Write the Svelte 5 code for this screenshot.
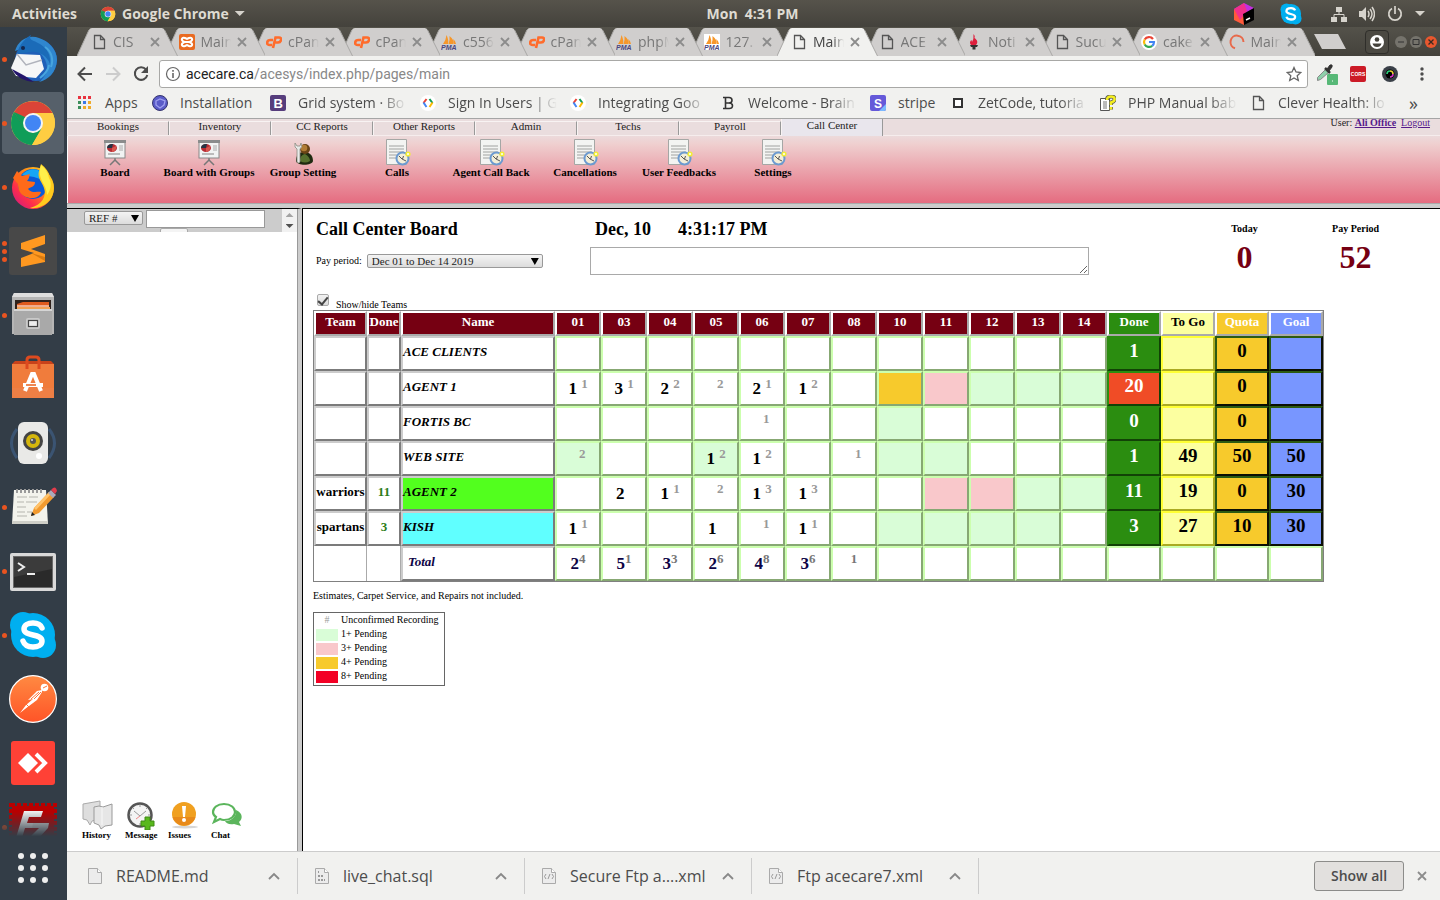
<script>
  const dock = [
    { icon: 'thunderbird', label: 'Thunderbird', dots: 1 },
    { icon: 'chrome', label: 'Google Chrome', dots: 1, active: true },
    { icon: 'firefox', label: 'Firefox', dots: 1 },
    { icon: 'sublime', label: 'Sublime Text', dots: 3 },
    { icon: 'files', label: 'Files', dots: 1 },
    { icon: 'software', label: 'Software', dots: 0 },
    { icon: 'rhythmbox', label: 'Rhythmbox', dots: 0 },
    { icon: 'gedit', label: 'Text Editor', dots: 1 },
    { icon: 'terminal', label: 'Terminal', dots: 1 },
    { icon: 'skype', label: 'Skype', dots: 1 },
    { icon: 'postman', label: 'Postman', dots: 0 },
    { icon: 'anydesk', label: 'AnyDesk', dots: 0 },
    { icon: 'filezilla', label: 'FileZilla', dots: 1, faded: true }
  ];

  const tabs = [
    ['page', 'CIS'], ['xampp', 'Main'], ['cpanel', 'cPan'], ['cpanel', 'cPan'],
    ['pma', 'c556'], ['cpanel', 'cPan'], ['pma', 'phpM'], ['pmaWhite', '127.'],
    ['page', 'Main'], ['page', 'ACE'], ['flame', 'Noti'], ['page', 'Sucu'],
    ['google', 'cake'], ['spinner', 'Main']
  ];
  const activeTab = 8;

  const bookmarks = [
    { icon: 'apps', text: 'Apps', w: 34 },
    { icon: 'orb', text: 'Installation', w: 77 },
    { icon: 'bootstrap', text: 'Grid system · Bo', w: 109, fade: true },
    { icon: 'gdev', text: 'Sign In Users  |  G', w: 109, fade: true },
    { icon: 'gdev', text: 'Integrating Goo', w: 109, fade: true },
    { icon: 'braintree', text: 'Welcome - Brain', w: 109, fade: true },
    { icon: 'stripe', text: 'stripe', w: 39 },
    { icon: 'square', text: 'ZetCode, tutoria', w: 109, fade: true },
    { icon: 'phpman', text: 'PHP Manual bab', w: 109, fade: true },
    { icon: 'page', text: 'Clever Health: lo', w: 109, fade: true }
  ];

  const menu = ['Bookings', 'Inventory', 'CC Reports', 'Other Reports', 'Admin', 'Techs', 'Payroll', 'Call Center'];

  const tools = [
    ['board', 'Board'], ['board', 'Board with Groups'], ['group', 'Group Setting'],
    ['calls', 'Calls'], ['calls', 'Agent Call Back'], ['calls', 'Cancellations'],
    ['calls', 'User Feedbacks'], ['calls', 'Settings']
  ];

  const shortcuts = [
    ['history', 'History'], ['message', 'Message'], ['issues', 'Issues'], ['chat', 'Chat']
  ];

  const days = ['01', '03', '04', '05', '06', '07', '08', '10', '11', '12', '13', '14'];

  // d: day index -> [confirmed, unconfirmed]; p: day index -> pending level
  const rows = [
    { name: 'ACE CLIENTS', d: {}, p: {}, sum: ['1', '', '0', ''] },
    { name: 'AGENT 1', d: { 0: ['1', '1'], 1: ['3', '1'], 2: ['2', '2'], 3: ['', '2'], 4: ['2', '1'], 5: ['1', '2'] },
      p: { 7: 'p4', 8: 'p3', 9: 'p1', 10: 'p1', 11: 'p1' }, sum: ['20', '', '0', ''], over: true },
    { name: 'FORTIS BC', d: { 4: ['', '1'] }, p: { 7: 'p1' }, sum: ['0', '', '0', ''] },
    { name: 'WEB SITE', d: { 0: ['', '2'], 3: ['1', '2'], 4: ['1', '2'], 6: ['', '1'] },
      p: { 0: 'p1', 3: 'p1', 7: 'p1', 8: 'p1' }, sum: ['1', '49', '50', '50'] },
    { team: 'warriors', done: '11', name: 'AGENT 2', color: 'lime',
      d: { 1: ['2', ''], 2: ['1', '1'], 3: ['', '2'], 4: ['1', '3'], 5: ['1', '3'] },
      p: { 8: 'p3', 9: 'p3', 10: 'p1', 11: 'p1' }, sum: ['11', '19', '0', '30'] },
    { team: 'spartans', done: '3', name: 'KISH', color: 'aqua',
      d: { 0: ['1', '1'], 3: ['1', ''], 4: ['', '1'], 5: ['1', '1'] },
      p: { 7: 'p1', 8: 'p1', 9: 'p1', 10: 'p1' }, sum: ['3', '27', '10', '30'] }
  ];
  const totals = [['2', '4'], ['5', '1'], ['3', '3'], ['2', '6'], ['4', '8'], ['3', '6'], ['', '1'], null, null, null, null, null];

  const legend = [['p1', '1+ Pending'], ['p3', '3+ Pending'], ['p4', '4+ Pending'], ['p8', '8+ Pending']];
  const downloads = [['file', 'README.md'], ['sql', 'live_chat.sql'], ['xml', 'Secure Ftp a….xml'], ['xml', 'Ftp acecare7.xml']];

  let showTeams = $state(true);
</script>

{#snippet chromeLogo(size)}
  <svg width={size} height={size} viewBox="0 0 48 48" aria-hidden="true">
    <circle cx="24" cy="24" r="22" fill="#ffcd42" />
    <path d="M24 24L13 30 5 13A22 22 0 0 1 43.500 14H24z" fill="#db4437" />
    <path d="M5 13A22 22 0 0 0 23 46L32.500 29.500 24 34 15.500 29z" fill="#0f9d58" />
    <path d="M5 13L15.500 30 16 18z" fill="#0f9d58" />
    <path d="M43.500 14H24L33 29.500 23 46A22 22 0 0 0 43.500 14z" fill="#ffcd42" />
    <circle cx="24" cy="24" r="10" fill="#f4f4f4" />
    <circle cx="24" cy="24" r="8" fill="#4285f4" />
  </svg>
{/snippet}

{#snippet dockIcon(name)}
  {#if name === 'chrome'}
    {@render chromeLogo(48)}
  {:else}
    <svg width="48" height="48" viewBox="0 0 48 48" aria-hidden="true">
      {#if name === 'thunderbird'}
        <circle cx="27" cy="25" r="21" fill="#1f5fb8" />
        <path d="M6 16C9 5 20-1 30 3c10 3 18 12 18 22-1 13-9 20-18 22 9-7 10-16 5-24C29 13 20 10 6 16z" fill="#2f86cf" />
        <path d="M8 19C10 9 18 2 22 0c-3 5 2 5 9 9 8 5 11 12 10 20-3-8-11-13-19-12z" fill="#1b6bb8" />
        <path d="M36 12c6 4 9 12 6 20M40 30c-1 6-5 10-9 13" fill="none" stroke="#47a4de" stroke-width="2" />
        <path d="M2 33L8 19l23 1 4 14-8 9L7 41z" fill="#f5f6f7" />
        <path d="M8 19l9 11 16-5" fill="none" stroke="#b0b3bc" stroke-width="1.500" />
        <path d="M3 34c4 8 12 12 22 13l-9-6z" fill="#23146c" />
        <circle cx="14" cy="13" r="2" fill="#142850" />
      {:else if name === 'firefox'}
        <defs>
          <linearGradient id="fx" x1="0" y1="1" x2="1" y2="0">
            <stop offset="0" stop-color="#c3178f" /><stop offset=".3" stop-color="#ff2d4a" />
            <stop offset=".6" stop-color="#ff8a16" /><stop offset="1" stop-color="#ffe226" />
          </linearGradient>
        </defs>
        <circle cx="24" cy="25" r="21" fill="url(#fx)" />
        <circle cx="24" cy="21" r="15" fill="#0a5ad8" />
        <path d="M13 12C17 6 27 4 32 9l2 8-9-3z" fill="#16a6f5" />
        <path d="M4 15l4-7 5 5 8-2c-1 3-1 5-3 7l8 1c0 5-5 5-7 7 4 5 10 2 13 3-1 6-10 8-17 4-5-3-6-8-6-12z" fill="#ff6a1a" />
        <path d="M30 8l2-7c5 4 8 8 9 13 5 6 5 16 0 23-5 6-13 9-20 8 12-3 17-12 14-20-2-6-7-10-5-17z" fill="#ffcb1e" />
        <path d="M31 6l1-4c5 4 7 8 8 13 3 5 2 12-2 17 0-10-9-15-7-26z" fill="#fff04a" />
      {:else if name === 'sublime'}
        <rect width="48" height="48" rx="3" fill="#484848" />
        <path d="M12 16L36 8v9L22 22l14 5v8L12 40v-9l13-5-13-4z" fill="#ff9820" />
        <path d="M22 26l14 4v4z" fill="#d87a10" />
      {:else if name === 'files'}
        <path d="M5 2h38l2 4v37H3V6z" fill="#b5b5b5" />
        <path d="M5 2h38l2 4H3z" fill="#dedede" />
        <rect x="6" y="9" width="36" height="12" fill="#30221c" />
        <path d="M8 13l6-2h26v10H8z" fill="#df5a1e" />
        <path d="M8 16h33v5H8z" fill="#f2a154" />
        <path d="M8 15h32" stroke="#fff" stroke-width="1" />
        <path d="M5 18h38v26H5z" fill="#a9a9a9" />
        <path d="M5 18h38v2H5z" fill="#d5d5d5" />
        <rect x="17" y="27" width="14" height="11" rx="2" fill="#c9c9c9" />
        <rect x="19.500" y="29.500" width="9" height="6" fill="#eee" stroke="#444" stroke-width="1.200" />
      {:else if name === 'software'}
        <path d="M3 9l3-3h36l3 3v34H3z" fill="#c8421a" />
        <rect x="3" y="9" width="42" height="34" fill="#f07c3c" />
        <rect x="3" y="33" width="42" height="10" fill="#ee7f45" />
        <path d="M18 14V5q0-3 3-3h6q3 0 3 3v9" fill="none" stroke="#dd4a1f" stroke-width="3" />
        <path d="M16 36l7-17h2l7 17M14 30h20" fill="none" stroke="#fff" stroke-width="4" />
        <path d="M17 30h10" stroke="#e8601c" stroke-width="1.500" />
      {:else if name === 'rhythmbox'}
        <path d="M8 10Q-3 24 8 39M40 10Q51 24 40 39" fill="none" stroke="#3b5472" stroke-width="3" />
        <rect x="9" y="3" width="30" height="42" rx="6" fill="#e9e9e7" />
        <circle cx="24" cy="22" r="10" fill="#444" />
        <circle cx="24" cy="22" r="7" fill="#d5b60c" />
        <circle cx="24" cy="22" r="3" fill="#555" />
        <circle cx="23" cy="21" r="1" fill="#ddd" />
        <circle cx="30" cy="37" r="3" fill="#fff" />
      {:else if name === 'gedit'}
        <path d="M5 7h32l2 34H3z" fill="#f3f3ec" />
        <path d="M3 38h36v3H3z" fill="#cfcfc8" />
        <path d="M8 6v4M12 6v4M16 6v4M20 6v4M24 6v4M28 6v4M32 6v4" stroke="#999" stroke-width="2" />
        <path d="M8 14h10m2 0h9M8 19h7m2 0h11M8 24h9M8 29h8m2 0h5M8 33h10" stroke="#b5b5ae" />
        <path d="M22 33l3-8L40 9l5 5-15 16z" fill="#f29a2e" />
        <path d="M25 25L40 9l2 2-15 16z" fill="#ffc36b" />
        <path d="M39 10l3-3 5 5-3 3z" fill="#aab" />
        <path d="M42 7l2-2q3-2 4 3l-2 3z" fill="#e23c4c" />
        <path d="M22 33l1-4 3 3z" fill="#222" />
      {:else if name === 'terminal'}
        <rect x="1" y="6" width="46" height="38" rx="2" fill="#d9d9d9" />
        <rect x="4" y="9" width="40" height="32" fill="#6a6a6a" />
        <rect x="5" y="10" width="38" height="30" fill="#2a2a2a" />
        <path d="M5 10h38v12L5 30z" fill="#3b3b3b" />
        <path d="M9 16l6 4-6 4M18 27h8" fill="none" stroke="#eee" stroke-width="2" />
      {:else if name === 'skype'}
        <circle cx="14" cy="14" r="13" fill="#00aff0" />
        <circle cx="34" cy="34" r="13" fill="#00aff0" />
        <circle cx="24" cy="24" r="22" fill="#00aff0" />
        <path d="M33 17q-2-5-9-5c-5 0-9 2-9 6 0 8 18 4 18 12 0 4-4 6-9 6q-8 0-10-6" fill="none" stroke="#fff" stroke-width="5.500" stroke-linecap="round" />
      {:else if name === 'postman'}
        <defs>
          <linearGradient id="pm" x1="0" y1="0" x2="0" y2="1">
            <stop offset="0" stop-color="#ff8a42" /><stop offset="1" stop-color="#ff5427" />
          </linearGradient>
        </defs>
        <circle cx="24" cy="24" r="23.400" fill="url(#pm)" stroke="#fff" stroke-width="1.200" />
        <circle cx="35.500" cy="12.500" r="3.800" fill="#fff" />
        <path d="M33 15l-5 1-9 9 5-1-7 6-6 8 5-4 12-9 5-8z" fill="#fff" />
        <path d="M22 24l8-7M25 24l7-7M17 29l3 3" stroke="#ff7438" />
        <path d="M34 13l4-2" stroke="#ff7438" />
      {:else if name === 'anydesk'}
        <rect x="2" y="2" width="44" height="44" rx="3" fill="#ff4136" />
        <path d="M9 24l10-10 10 10-10 10z" fill="#fff" />
        <path d="M27 15l9 9-9 9" fill="none" stroke="#fff" stroke-width="4" />
      {:else if name === 'filezilla'}
        <rect x="2" y="2" width="44" height="44" fill="none" stroke="#b80000" stroke-width="4" stroke-dasharray="4 2" />
        <rect x="3" y="3" width="42" height="42" fill="#b80000" />
        <path d="M15 8h19l-2 6H20l-2 6h11l-2 5H16l-4 13H6z" fill="#eee" />
        <path d="M24 20h16l-1 5-12 13h11l-1 4H17l1-5 12-12h-7z" fill="#ddd" />
      {/if}
    </svg>
  {/if}
{/snippet}

{#snippet glyph(name)}
  <svg width="16" height="16" viewBox="0 0 16 16" aria-hidden="true">
    {#if name === 'page'}
      <path d="M3.500 1.500h6l4 4v9h-10zM9.500 1.500v4h4" fill="none" stroke="#555" stroke-width="1.300" />
    {:else if name === 'xampp'}
      <rect width="16" height="16" rx="2" fill="#e96a20" />
      <path d="M5.500 8C1 6 3 3 6 4l2 1 2-1c3-1 5 2 .500 4 4.500 2 2.500 5-.500 4l-2-1-2 1c-3 1-5-2-.500-4zM6 8h4" fill="none" stroke="#fff" stroke-width="2" />
    {:else if name === 'cpanel'}
      <path d="M7 6H4.500Q1.500 6 1.200 8.500T4 11h2M7 14L9.500 3.500H13q2.500 0 2 2.500t-3 2.500H9.500" fill="none" stroke="#ff6c2c" stroke-width="2.600" />
    {:else if name === 'pma' || name === 'pmaWhite'}
      {#if name === 'pmaWhite'}<rect width="16" height="16" fill="#fff" />{/if}
      <path d="M2 10Q5 6 5.500 1 8 6 7 10zM7.500 10Q9 6 8.500 2q5 4 4 8zM13 10q0-3-1-5 3 2 3 5z" fill="#f6972a" />
      <text x="0" y="16" font-family="Liberation Sans" font-size="7" font-weight="700" font-style="italic" fill="#4a4680">PMA</text>
    {:else if name === 'flame'}
      <path d="M7.500 0q2 2 1 4c3 2 4 5 1 7.500H6C3 10 4 7 5.500 6l.500 2q2-3 1.500-8z" fill="#dd1f3d" />
      <path d="M4 11h8l-1 2H9.500v2.500h-3V13H5z" fill="#333" />
    {:else if name === 'google'}
      <circle cx="8" cy="8" r="8" fill="#fff" />
      <path d="M12 5A5 5 0 0 0 3.700 5.500" fill="none" stroke="#ea4335" stroke-width="2.200" />
      <path d="M3.700 5.500a5 5 0 0 0 0 5" fill="none" stroke="#fbbc05" stroke-width="2.200" />
      <path d="M3.700 10.500a5 5 0 0 0 7.500 1.300" fill="none" stroke="#34a853" stroke-width="2.200" />
      <path d="M11.200 11.800Q13 10.300 13 8H8" fill="none" stroke="#4285f4" stroke-width="2.200" />
    {:else if name === 'spinner'}
      <path d="M6 14.300A6.500 6.500 0 1 1 14.500 8" fill="none" stroke="#e8694a" stroke-width="2" />
    {:else if name === 'apps'}
      <g transform="translate(1 1)">
        <path d="M0 0h3v3H0zM5 0h3v3H5zM10 0h3v3h-3z" fill="#e8333f" />
        <path d="M0 5h3v3H0z" fill="#3b8e5a" /><path d="M5 5h3v3H5z" fill="#3b78e7" /><path d="M10 5h3v3h-3z" fill="#efab2a" />
        <path d="M0 10h3v3H0z" fill="#3b8e5a" /><path d="M5 10h3v3H5zM10 10h3v3h-3z" fill="#efab2a" />
      </g>
    {:else if name === 'orb'}
      <circle cx="8" cy="8" r="7.500" fill="#5a5bc8" stroke="#35356e" />
      <path d="M4 6l4-2 5 2-1 4-4 3-4-3z" fill="none" stroke="#9fa0f0" stroke-width="1.300" />
    {:else if name === 'bootstrap'}
      <rect width="16" height="16" rx="2" fill="#563d7c" />
      <text x="3.500" y="13" font-family="Liberation Sans" font-size="13" font-weight="700" fill="#fff">B</text>
    {:else if name === 'gdev'}
      <circle cx="8" cy="8" r="8" fill="#fff" />
      <path d="M6.500 4L3.500 8" stroke="#ea4335" stroke-width="2" /><path d="M3.500 7.500l3 4.500" stroke="#4285f4" stroke-width="2" />
      <path d="M9.500 4l3 4" stroke="#0f9d58" stroke-width="2" /><path d="M12.500 7.500l-3 4.500" stroke="#fbbc05" stroke-width="2" />
    {:else if name === 'braintree'}
      <path d="M3 2.500h6q3 0 3 2.700T9 8q3.500 0 3.500 2.800T9 13.500H3M5.500 2.500v11M5.500 8H9" fill="none" stroke="#333" stroke-width="1.600" />
    {:else if name === 'stripe'}
      <rect width="16" height="16" rx="2" fill="#6559d9" />
      <path d="M16 9v5q0 2-2 2H9z" fill="#7bb9ff" />
      <text x="4" y="12.500" font-family="Liberation Sans" font-size="12" font-weight="700" fill="#fff">S</text>
    {:else if name === 'square'}
      <rect x="4" y="4" width="8" height="8" fill="#fff" stroke="#333" stroke-width="2" />
    {:else if name === 'phpman'}
      <path d="M.500 3.500h9v12h-9z" fill="#fff" stroke="#555" /><path d="M3 7h4M3 9h4M3 11h4M3 13h4" stroke="#777" />
      <path d="M7 5q0-3.500 4-3.500t3.500 3q0 2-3.500 3V10M11 12v2.500" fill="none" stroke="#555" stroke-width="4" />
      <path d="M7 5q0-3.500 4-3.500t3.500 3q0 2-3.500 3V10M11 12v2.500" fill="none" stroke="#f4ee20" stroke-width="2.600" />
    {:else}
      <path d="M1.500.500h9l4 4v11h-13z" fill="#ececec" stroke="#aaa" /><path d="M10.500.500v4h4" fill="#fff" stroke="#aaa" />
      {#if name === 'sql'}
        <path d="M4 4h1M4 8h2M7 8h2M4 12h2M7 12h2M10 12h1" stroke="#999" stroke-width="2" />
      {:else if name === 'xml'}
        <path d="M5 6L3.500 8.500 5 11M11 6l1.500 2.500L11 11M9 6l-2 5" fill="none" stroke="#999" />
      {/if}
    {/if}
  </svg>
{/snippet}

{#snippet toolIcon(name)}
  <svg width="28" height="28" viewBox="0 0 28 28" aria-hidden="true">
    {#if name === 'board'}
      <path d="M14 19v3M14 21l-5 5M14 21l5 5" stroke="#777" stroke-width="1.500" fill="none" />
      <rect x="4" y="3" width="20" height="16" fill="#f1f3f3" stroke="#888" />
      <rect x="3" y="1" width="22" height="3" fill="#8a8c8c" />
      <ellipse cx="11" cy="9" rx="5" ry="4" fill="#b62c34" /><path d="M11 9H6a5 4 0 0 1 6-4z" fill="#243444" /><path d="M11 9l4-2a4.500 4.500 0 0 1-4 6z" fill="#d8564e" />
      <path d="M18 7h4M18 9h4M18 11h4" stroke="#aaa" /><path d="M7 15h12" stroke="#bbb" stroke-width="2" />
    {:else if name === 'group'}
      <path d="M7 22c0-6 3-9 8-9s9 3 9 9c-1 5-16 5-17 0z" fill="#1f2a10" />
      <path d="M11 22q0-6 5-7 5 3 5 7-5 3-10 0z" fill="#56702e" />
      <circle cx="16" cy="10" r="5" fill="#6a4416" /><circle cx="15" cy="9" r="3.300" fill="#b07c34" />
      <path d="M6 4q-1 5 2 6v13q2 2 3 0V10q3-2 1-6l-1 3H8z" fill="#e8eae8" stroke="#8a8a80" stroke-width=".8" />
    {:else}
      <path d="M3.500.500h20v25h-20z" fill="#f3f4f2" stroke="#a5a7a5" />
      <path d="M6 7h15M6 10h15M6 13h15M6 16h10M6 19h8" stroke="#a0a2a0" />
      <circle cx="19.500" cy="19.500" r="6" fill="#f3eed8" stroke="#6c9ad0" stroke-width="2" />
      <path d="M16 17l3 3 4 2M19.500 20l1-3" stroke="#555" fill="none" />
      <circle cx="25" cy="15" r="2.600" fill="#f2ee38" /><circle cx="25" cy="15" r="1" fill="#fff" />
    {/if}
  </svg>
{/snippet}

{#snippet shortcutIcon(name)}
  <svg width="32" height="30" viewBox="0 0 32 30" aria-hidden="true">
    {#if name === 'history'}
      <path d="M1 4l17-3v18l-8 2-2 4-3-5-4-1z" fill="#dedede" stroke="#aaa" />
      <path d="M12 7l5-1 4 1 9-3v21l-7 1-4 3-2-4-5-2z" fill="#e6e6e6" stroke="#9a9a9a" />
      <path d="M20 7v18" stroke="#f8f8f8" />
    {:else if name === 'message'}
      <circle cx="15" cy="15" r="11.500" fill="#f4f4f4" stroke="#555" stroke-width="2.500" />
      <path d="M15 5v2M15 23v2M5 15h2M23 15h2M8 8l1 1M22 8l-1 1" stroke="#999" />
      <path d="M9 11l6 5 6-5" fill="none" stroke="#999" /><path d="M15 16l-4 3" stroke="#e88" />
      <path d="M20 17h5v4h4v5h-4v4h-5v-4h-4v-5h4z" fill="#58b81c" stroke="#3e8a14" />
    {:else if name === 'issues'}
      <ellipse cx="17" cy="27" rx="13" ry="1.500" fill="#d6d6d6" />
      <circle cx="16" cy="14" r="12" fill="#f0a020" /><path d="M4.500 17a12 12 0 0 0 23 0z" fill="#e88a1a" />
      <path d="M14 6h4l-1 11h-2z" fill="#fff" /><circle cx="16" cy="20" r="2" fill="#fff" />
    {:else}
      <path d="M25 10c7 3 7 9 3 12l2 4-7-2c-5 1-8-1-9-3 7 0 12-5 11-11z" fill="#5bb55c" />
      <path d="M13 4c7 0 11 4 11 8s-4 8-11 8q-2 0-4-1l-6 3 2-5q-3-2-3-5c0-4 4-8 11-8z" fill="#fff" stroke="#5bb55c" stroke-width="2.200" />
    {/if}
  </svg>
{/snippet}

{#snippet cross()}
  <svg width="10" height="10" viewBox="0 0 10 10" aria-hidden="true"><path d="M1 1l8 8M9 1l-8 8" stroke="#8c8c8c" stroke-width="1.800" /></svg>
{/snippet}

<div class="desktop">
  <header class="topbar">
    <div class="side">
      <button class="bare">Activities</button>
      <button class="bare app">{@render chromeLogo(16)}<span>Google Chrome</span><i class="caret"></i></button>
    </div>
    <button class="bare clock">Mon&nbsp; 4:31 PM</button>
    <div class="side tray">
      <svg width="22" height="24" viewBox="0 0 22 24" aria-hidden="true">
        <path d="M1 7l10-6 10 5-10 6z" fill="#c42ee0" /><path d="M1 7l10 5v11L1 18z" fill="#ff5a3c" /><path d="M1 7l10-6 3 8-7 9z" fill="#f1308c" /><path d="M10 12l11-6v12l-10 5z" fill="#000" /><path d="M13 18l4-2" stroke="#fff" stroke-width="1.500" />
      </svg>
      <svg class="tskype" width="22" height="22" viewBox="0 0 48 48" aria-hidden="true">
        <circle cx="14" cy="14" r="13" fill="#00aff0" /><circle cx="34" cy="34" r="13" fill="#00aff0" /><circle cx="24" cy="24" r="22" fill="#00aff0" />
        <path d="M33 16q-2-5-9-5c-6 0-10 3-10 7 0 8 19 4 19 12 0 4-4 6-9 6q-8 0-10-6" fill="none" stroke="#fff" stroke-width="5" />
      </svg>
      <svg width="16" height="16" viewBox="0 0 16 16" aria-hidden="true"><path d="M5 1h6v5H5zM0 11h6v5H0zM10 11h6v5h-6z" fill="#d6d3cc" /><path d="M8 6v3M3 11V8.500h10V11" fill="none" stroke="#d6d3cc" /></svg>
      <svg width="16" height="16" viewBox="0 0 16 16" aria-hidden="true"><path d="M0 5h3l4-4v14l-4-4H0z" fill="#d6d3cc" /><path d="M9 5q2 3 0 6M11 3q4 5 0 10M13 1q5 7 0 14" fill="none" stroke="#d6d3cc" stroke-width="1.500" /></svg>
      <svg width="16" height="16" viewBox="0 0 16 16" aria-hidden="true"><path d="M5 2.500a6.200 6.200 0 1 0 6 0M8 0v8" fill="none" stroke="#d6d3cc" stroke-width="1.700" /></svg>
      <i class="caret"></i>
    </div>
  </header>

  <nav class="dock" aria-label="Dock">
    <div class="apps">
      {#each dock as item}
        <button class="launcher" class:active={item.active} class:faded={item.faded} aria-label={item.label}>
          <span class="dots">{#each Array(item.dots) as _}<i></i>{/each}</span>
          {@render dockIcon(item.icon)}
        </button>
      {/each}
    </div>
    <button class="grid" aria-label="Show Applications">{#each Array(9) as _}<i></i>{/each}</button>
  </nav>

  <div class="browser">
    <div class="strip">
      <div class="tabs">
        {#each tabs as [icon, title], i}
          <div class="tab" class:current={i === activeTab} style="z-index: {i === activeTab ? 20 : 14 - i}">
            <svg class="shape" viewBox="0 0 101 28" preserveAspectRatio="none" aria-hidden="true">
              <path d="M0 28L12 2q1-2 3-2h70q2 0 3 2l13 26z" />
              <path class="edge" d="M0 28L12 2M88 2l13 26" />
            </svg>
            {@render glyph(icon)}
            <span class="title">{title}</span>
            <button class="bare x" aria-label="Close tab">{@render cross()}</button>
          </div>
        {/each}
      </div>
      <button class="newtab" aria-label="New tab"></button>
      <button class="person" aria-label="Profile">
        <svg width="16" height="16" viewBox="0 0 16 16" aria-hidden="true"><circle cx="8" cy="8" r="7" fill="#fff" /><circle cx="8" cy="5.500" r="2.300" fill="#44423c" /><path d="M3.500 9.500h9q-1 3.500-4.500 3.500t-4.500-3.500z" fill="#44423c" /></svg>
      </button>
      <div class="winbtns">
        <button aria-label="Minimize"><svg width="12" height="12" viewBox="0 0 12 12"><circle cx="6" cy="6" r="6" fill="#75736c" /><path d="M3 6h6" stroke="#333" /></svg></button>
        <button aria-label="Maximize"><svg width="12" height="12" viewBox="0 0 12 12"><circle cx="6" cy="6" r="6" fill="#75736c" /><path d="M3 3.500h6v5H3z" fill="none" stroke="#333" /></svg></button>
        <button aria-label="Close"><svg width="12" height="12" viewBox="0 0 12 12"><circle cx="6" cy="6" r="6" fill="#e8572e" /><path d="M3.500 3.500l5 5M8.500 3.500l-5 5" stroke="#3b2a22" stroke-width="1.300" /></svg></button>
      </div>
    </div>

    <div class="toolbar">
      <button class="bare" aria-label="Back"><svg width="16" height="16" viewBox="0 0 16 16"><path d="M15 8H2M8 1.500L1.500 8 8 14.500" fill="none" stroke="#4c4c4c" stroke-width="2" /></svg></button>
      <button class="bare" aria-label="Forward"><svg width="16" height="16" viewBox="0 0 16 16"><path d="M1 8h13M8 1.500L14.500 8 8 14.500" fill="none" stroke="#ccc" stroke-width="2" /></svg></button>
      <button class="bare" aria-label="Reload"><svg width="16" height="16" viewBox="0 0 16 16"><path d="M13 3.500A6.300 6.300 0 1 0 14.300 9" fill="none" stroke="#4c4c4c" stroke-width="2" /><path d="M15 0v7H8z" fill="#4c4c4c" /></svg></button>
      <div class="omnibox">
        <svg width="16" height="16" viewBox="0 0 16 16" aria-hidden="true"><circle cx="8" cy="8" r="6.500" fill="none" stroke="#666" stroke-width="1.200" /><path d="M8 7v5M8 4v1.800" stroke="#666" stroke-width="1.600" /></svg>
        <a class="url" href="#main">acecare.ca<span>/acesys/index.php/pages/main</span></a>
        <button class="bare" aria-label="Bookmark this page"><svg width="16" height="16" viewBox="0 0 16 16"><path d="M8 1.500l2 4.500 4.800.500-3.600 3.200 1.100 4.800L8 12l-4.300 2.500 1.100-4.800L1.200 6.500 6 6z" fill="none" stroke="#666" stroke-width="1.300" /></svg></button>
      </div>
      <div class="exts">
        <button class="bare" aria-label="Color picker"><svg width="22" height="22" viewBox="0 0 22 22"><path d="M1.500 14.500l8-8 3 3-8 7-3 1z" fill="#8fd0ab" stroke="#888" /><path d="M9 5l5 5" stroke="#333" stroke-width="2.500" /><path d="M11 6l3-4q3-1 2 2l-3 4z" fill="#333" stroke="#333" /><rect x="11" y="11" width="11" height="11" rx="1" fill="#57b877" /><path d="M16 18h1" stroke="#fff" /></svg></button>
        <button class="bare cors" aria-label="CORS"><svg width="16" height="16" viewBox="0 0 16 16"><rect width="16" height="16" rx="2" fill="#cc1b27" /><text x="8" y="10" text-anchor="middle" font-family="Liberation Sans" font-size="5" font-weight="700" fill="#fff">CORS</text></svg></button>
        <button class="bare" aria-label="Camera"><svg width="16" height="16" viewBox="0 0 16 16"><circle cx="8" cy="8" r="8" fill="#3a4048" /><circle cx="8" cy="8" r="4.500" fill="#000" /><path d="M5 8a3 3 0 0 1 3-3" stroke="#2bd07a" stroke-width="1.600" fill="none" /><path d="M8 5a3 3 0 0 1 3 3" stroke="#e8d030" stroke-width="1.600" fill="none" /><path d="M11 8a3 3 0 0 1-3 3" stroke="#d838c8" stroke-width="1.600" fill="none" /></svg></button>
        <button class="bare" aria-label="Menu"><svg width="4" height="16" viewBox="0 0 4 16"><circle cx="2" cy="3" r="1.700" fill="#4c4c4c" /><circle cx="2" cy="8" r="1.700" fill="#4c4c4c" /><circle cx="2" cy="13" r="1.700" fill="#4c4c4c" /></svg></button>
      </div>
    </div>

    <div class="bookmarks">
      {#each bookmarks as b}
        <a href="#bookmark" class="bookmark">
          {@render glyph(b.icon)}
          <span class:fade={b.fade} style="width: {b.w}px">{b.text}</span>
        </a>
      {/each}
      <button class="bare more" aria-label="More bookmarks">»</button>
    </div>

    <div class="page">
      <header class="sitehead">
        <nav class="menu">
          {#each menu as m, i}<a href="#menu" class:on={i === 7}>{m}</a>{/each}
          <div class="user">User: <a href="#user"><b>Ali Office</b></a>&nbsp; <a href="#logout">Logout</a></div>
        </nav>
        <div class="tools">
          {#each tools as [icon, label]}
            <a href="#tool">{@render toolIcon(icon)}<b>{label}</b></a>
          {/each}
        </div>
      </header>

      <div class="frames">
        <aside>
          <form class="search">
            <div class="fields">
              <span class="select ref"><select aria-label="Search field"><option>REF #</option></select></span>
              <input type="text" aria-label="Search value" />
              <button type="button" class="stub" aria-label="Search"></button>
            </div>
            <div class="scroll"><i class="up"></i><i class="down"></i></div>
          </form>
          <div class="shortcuts">
            {#each shortcuts as [icon, label]}
              <a href="#shortcut">{@render shortcutIcon(icon)}<b>{label}</b></a>
            {/each}
          </div>
        </aside>

        <main id="main">
          <div class="heading">
            <div class="left">
              <h1>Call Center Board</h1>
              <div class="period"><label for="period">Pay period:</label>
                <span class="select"><select id="period"><option>Dec 01 to Dec 14 2019</option></select></span></div>
            </div>
            <div class="mid">
              <h2><span>Dec, 10</span><span>4:31:17 PM</span></h2>
              <textarea aria-label="Message"></textarea>
            </div>
            <div class="stats">
              <div><b>Today</b><strong>0</strong></div>
              <div><b>Pay Period</b><strong>52</strong></div>
            </div>
          </div>

          <label class="toggle"><input type="checkbox" bind:checked={showTeams} /><span>Show/hide Teams</span></label>

          <table class="board">
            <colgroup>
              {#if showTeams}<col class="c-team" /><col class="c-tdone" />{/if}
              <col class="c-name" />
              {#each days as _}<col class="c-day" />{/each}
              <col class="c-sum" /><col class="c-sum" /><col class="c-sum" /><col class="c-sum" />
            </colgroup>
            <thead>
              <tr>
                {#if showTeams}<th>Team</th><th>Done</th>{/if}
                <th>Name</th>
                {#each days as d}<th>{d}</th>{/each}
                <th class="h-done">Done</th><th class="h-togo">To Go</th><th class="h-quota">Quota</th><th class="h-goal">Goal</th>
              </tr>
            </thead>
            <tbody>
              {#each rows as r}
                <tr>
                  {#if showTeams}<td class="team">{r.team ?? ''}</td><td class="team tdone">{r.done ?? ''}</td>{/if}
                  <td class="name {r.color ?? ''}">{r.name}</td>
                  {#each days as _, i}
                    <td class="day {r.p[i] ?? ''}">{#if r.d[i]}{r.d[i][0] || '\u00a0'}&nbsp;<sup>{r.d[i][1] || '\u00a0'}</sup>{/if}</td>
                  {/each}
                  <td class="sum done" class:over={r.over}>{r.sum[0]}</td>
                  <td class="sum togo">{r.sum[1]}</td>
                  <td class="sum quota">{r.sum[2]}</td>
                  <td class="sum goal">{r.sum[3]}</td>
                </tr>
              {/each}
              <tr class="total">
                {#if showTeams}<td class="plain"></td><td class="plain"></td>{/if}
                <td class="name">Total</td>
                {#each totals as t}
                  <td class="day">{#if t}{t[0]}<sup>{t[1]}</sup>{/if}</td>
                {/each}
                <td class="day"></td><td class="day"></td><td class="day"></td><td class="day"></td>
              </tr>
            </tbody>
          </table>

          <p class="note">Estimates, Carpet Service, and Repairs not included.</p>

          <dl class="legend">
            <dt class="hash">#</dt><dd>Unconfirmed Recording</dd>
            {#each legend as [cls, text]}<dt class={cls}></dt><dd>{text}</dd>{/each}
          </dl>
        </main>
      </div>
    </div>

    <footer class="shelf">
      {#each downloads as [icon, name]}
        <div class="dl">
          {@render glyph(icon)}
          <span>{name}</span>
          <button class="bare" aria-label="Options"><svg width="12" height="8" viewBox="0 0 12 8"><path d="M1 7l5-5 5 5" fill="none" stroke="#888" stroke-width="1.800" /></svg></button>
        </div>
      {/each}
      <button class="showall">Show all</button>
      <button class="bare" aria-label="Close">{@render cross()}</button>
    </footer>
  </div>
</div>

<style>
  :global(body) { margin: 0; background: #fff; }
  * { box-sizing: border-box; }
  svg { display: block; flex: none; }
  button { font: inherit; color: inherit; cursor: pointer; }
  .bare { background: none; border: 0; padding: 0; display: flex; align-items: center; }
  .desktop {
    display: grid; grid-template: 27px minmax(0, 1fr) / 67px minmax(0, 1fr);
    height: 100vh; font: 14px/20px "Open Sans", "Noto Sans", sans-serif; color: #4c4c4c;
  }

  .topbar {
    grid-column: 1 / -1; display: flex; align-items: center; padding: 0 15px 0 12px;
    background: linear-gradient(#56534b, #44423c); color: #dfdbd2; font-weight: 700;
  }
  .side { flex: 1; display: flex; align-items: center; gap: 23px; }
  .app { gap: 6px; }
  .clock { padding-left: 68px; }
  .caret { width: 10px; height: 5px; background: #d6d3cc; clip-path: polygon(0 0, 100% 0, 50% 100%); }
  .tray { justify-content: flex-end; gap: 12px; }
  .tray .tskype { margin: 0 17px 0 13px; }

  .dock { display: flex; flex-direction: column; background: #333d47; min-height: 0; }
  .apps { flex: 1; min-height: 0; overflow: hidden; }
  .launcher {
    display: flex; align-items: center; gap: 1px; width: 62px; height: 62px; margin: 1px 0 2px 2px; padding: 0;
    border: 0; border-radius: 4px; background: none;
  }
  .launcher.active { background: #56606a; }
  .launcher.faded { mask-image: linear-gradient(#000 25%, transparent 65%); }
  .dots { display: grid; gap: 3px; width: 6px; align-content: center; }
  .dots i { width: 5px; height: 5px; border-radius: 50%; background: #e95420; }
  .grid {
    display: grid; grid-template-columns: repeat(3, 6px); gap: 6px; place-content: center;
    height: 64px; border: 0; background: none; padding: 0 2px 0 0;
  }
  .grid i { width: 6px; height: 6px; border-radius: 50%; background: #eee; }

  .browser { display: flex; flex-direction: column; min-width: 0; min-height: 0; background: #f1f1ef; }
  .strip { display: flex; align-items: center; height: 29px; flex: none; padding: 0 3px 0 10px; background: linear-gradient(#54524a, #44423c); }
  .tabs { flex: 1; min-width: 0; display: flex; align-self: stretch; padding-top: 1px; }
  .tab { position: relative; flex: 1; min-width: 0; display: flex; align-items: center; padding-left: 14px; color: #777; }
  .shape { position: absolute; left: 0; top: 0; width: calc(100% + 13px); height: 100%; fill: #d0cecd; z-index: -1; }
  .edge { fill: none; stroke: #a9a8a6; }
  .current { color: #444; }
  .current .shape { fill: #f1f1ef; }
  .title { flex: 1; min-width: 0; margin-left: 6px; overflow: hidden; white-space: nowrap; mask-image: linear-gradient(90deg, #000 65%, transparent); }
  .tab .x { margin: 0 5px 0 6px; }
  .newtab { flex: none; width: 32px; height: 15px; margin: 0 19px 0 12px; padding: 0; border: 0; background: #d0cecd; clip-path: polygon(0 0, 75% 0, 100% 100%, 25% 100%); }
  .person { flex: none; width: 24px; height: 24px; margin-right: 6px; padding: 0; display: grid; place-items: center; border: 1px solid #2f2e2a; border-radius: 4px; background: #4b4942; }
  .winbtns { flex: none; display: flex; gap: 3px; }
  .winbtns button { padding: 0; border: 0; background: none; }

  .toolbar { display: flex; align-items: center; height: 36px; flex: none; padding: 0 16px 0 10px; gap: 12px; }
  .omnibox { flex: 1; display: flex; align-items: center; gap: 5px; height: 28px; padding: 0 5px; background: #fff; border: 1px solid #a8a8a6; border-radius: 3px; margin: 0 -4px 0 -2px; }
  .url { flex: 1; color: #222; text-decoration: none; font-family: Roboto, sans-serif; }
  .url span { color: #888; }
  .exts { display: flex; align-items: center; gap: 14px; }
  .exts .cors { margin: 0 2px 0 -2px; }
  .exts button:last-child { margin-left: 8px; }
  .bookmarks { display: flex; align-items: center; gap: 13px; height: 27px; flex: none; padding: 0 22px 4px 10px; border-bottom: 1px solid #a5a5a5; }
  .bookmark { display: flex; align-items: center; gap: 12px; color: inherit; text-decoration: none; }
  .bookmark span { white-space: nowrap; }
  .bookmark .fade { overflow: hidden; mask-image: linear-gradient(90deg, #000 75%, transparent); }
  .more { margin-left: auto; font-size: 18px; }

  .page { flex: 1; display: flex; flex-direction: column; min-height: 0; background: #fff; color: #000; font: 10px/12px "Liberation Serif", "Times New Roman", serif; }
  .sitehead { flex: none; border-bottom: 1px solid #aaa; }
  .menu { display: flex; height: 17px; background: #eaddde; border-bottom: 1px solid #f6eded; }
  .menu > a { width: 102px; margin-top: 2px; height: 14px; border-top: 1px solid #f8f3f3; border-right: 1px solid #999; border-left: 1px solid #f8f3f3; font-size: 11px; line-height: 9px; text-align: center; color: #222; text-decoration: none; }
  .menu > a.on { margin-top: 0; height: 17px; background: #e9e6ed; border-top: 0; line-height: 12px; }
  .user { margin-left: auto; padding-right: 10px; line-height: 8px; white-space: nowrap; color: #222; }
  .user a { color: #551a8b; }
  .tools { display: flex; height: 67px; padding-top: 3px; border-left: 1px solid #fff; background: linear-gradient(#ecdadb, #efcfcf 12%, #e56c80); }
  .tools a { width: 94px; display: flex; flex-direction: column; align-items: center; font-size: 11px; line-height: 10px; color: #000; text-decoration: none; white-space: nowrap; }

  .frames { flex: 1; min-height: 0; display: grid; grid-template-columns: 235px minmax(0, 1fr); border-top: 4px solid #ccc; }
  aside { display: flex; flex-direction: column; justify-content: space-between; border-right: 4px solid #ccc; border-top: 1px solid #000; box-shadow: inset -1px 0 #999; min-width: 0; }
  main { border: solid #000; border-width: 1px 0 0 1px; padding: 10px 10px 0; overflow: hidden; }
  .search { display: flex; height: 23px; margin-right: 1px; background: #ccc; }
  .fields { flex: 1; display: flex; flex-wrap: wrap; align-items: flex-start; gap: 0 3px; padding: 1px 0 0 17px; overflow: hidden; }
  .fields input { width: 119px; height: 18px; border: 1px solid #999; padding: 0 2px; }
  .stub { height: 14px; width: 28px; margin: 0 0 0 76px; padding: 0; border: 1px solid #aaa; background: #f4f4f4; border-radius: 2px; }
  .select { position: relative; display: inline-block; }
  .select::after { content: ""; position: absolute; right: 4px; top: 4px; width: 8px; height: 7px; background: #000; clip-path: polygon(0 0, 100% 0, 50% 100%); pointer-events: none; }
  select { appearance: none; display: block; width: 176px; height: 14px; padding: 0 4px; font: 11px/11px "Liberation Serif", serif; color: #222; border: 1px solid #999; border-radius: 2px; background: linear-gradient(#f4f4f4, #dcdcdc); }
  .ref { margin-top: 1px; }
  .ref select { width: 59px; }
  .scroll { width: 15px; background: #f1f1f1; display: flex; flex-direction: column; align-items: center; justify-content: center; gap: 7px; }
  .scroll i { width: 8px; height: 4px; background: #505050; clip-path: polygon(0 0, 100% 0, 50% 100%); }
  .scroll .up { background: #a3a3a3; clip-path: polygon(50% 0, 100% 100%, 0 100%); }
  .shortcuts { display: flex; gap: 11px; padding: 0 0 11px 15px; font-size: 9px; line-height: 10px; }
  .shortcuts a { width: 32px; display: flex; flex-direction: column; color: #000; text-decoration: none; }

  .heading { display: flex; padding-left: 3px; }
  .left { width: 274px; }
  h1, h2 { margin: 0; font-size: 18px; line-height: 20px; }
  h2 span { margin: 0 22px 0 5px; }
  .period { display: flex; align-items: center; gap: 5px; margin-top: 15px; height: 14px; }
  textarea { display: block; width: 499px; height: 28px; margin-top: 8px; border: 1px solid #a9a9a9; padding: 2px; }
  .stats { display: flex; margin-left: 100px; text-align: center; }
  .stats div { width: 111px; display: flex; flex-direction: column; }
  .stats b { line-height: 20px; }
  .stats strong { font-size: 32px; line-height: 36px; color: #760012; }
  .toggle { display: flex; align-items: flex-end; gap: 7px; height: 17px; margin-top: 18px; padding-left: 4px; line-height: 11px; }
  .toggle input { appearance: none; width: 12px; height: 12px; margin: 0 0 4px; border: 1px solid #aaa; border-radius: 2px; background: linear-gradient(#f2f2f2, #dcdcdc); display: grid; place-items: center; }
  .toggle input:checked::after { content: ""; width: 4px; height: 8px; border: solid #444; border-width: 0 2px 2px 0; transform: rotate(40deg); }

  .board { table-layout: fixed; width: 1011px; border: 1px solid #808080; border-spacing: 0; font-size: 13px; line-height: 16px; font-weight: 700; text-align: center; }
  .c-team { width: 53px; } .c-tdone { width: 34px; } .c-name { width: 154px; } .c-day { width: 46px; } .c-sum { width: 54px; }
  th, td { padding: 0; border: 2px solid; overflow: visible; white-space: nowrap; }
  th { height: 25px; padding-bottom: 4px; color: #fff; background: #760012; border-color: #fff #aaa #aaa #fff; }
  .h-done { background: #2b8d10; } .h-togo { background: #fcffa0; color: #000; } .h-quota { background: #f7ca2c; } .h-goal { background: #7896ff; }
  td { height: 35px; border-color: #ccc #7b7b7b #7b7b7b #ccc; }
  .team, .name { padding-bottom: 4px; }
  .tdone { color: #2b7d18; }
  .name { text-align: left; font-style: italic; }
  .lime { background: #52ff1e; } .aqua { background: #60ffff; }
  .day { border-color: #ccffae #87a873 #87a873 #ccffae; font-size: 17px; line-height: 20px; padding-bottom: 0; }
  sup { font-size: 13px; line-height: 0; vertical-align: 6px; color: #999; }
  .p1 { background: #d9fdd7; } .p3 { background: #f9c8cb; } .p4 { background: #f7ca2c; } .p8 { background: #f30025; }
  .sum { font-size: 19px; line-height: 20px; padding-bottom: 6px; }
  .done { color: #fff; background: #2b8d10; border-color: #2b8d10 #124207 #124207 #2b8d10; }
  .done.over { background: #f04c26; }
  .togo { background: #fcffa0; border-color: #ffff33 #aaaa22 #aaaa22 #ffff33; }
  .quota, .goal { border-color: #2c5a12 #0b0f05 #0b0f05 #2c5a12; }
  .quota { background: #f7ca2c; } .goal { background: #7896ff; }
  .total td { color: #0d0345; }
  .total .name { padding-left: 5px; }
  .total sup { color: #777; }
  .plain { border: solid #aaa; border-width: 0 1px 0 0; }

  .note { margin: 8px 0 10px; }
  .legend { display: grid; grid-template-columns: 22px auto; gap: 2px 3px; width: max-content; margin: 0; padding: 2px 6px 2px 2px; border: 1px solid #666; }
  dt { height: 12px; } dd { margin: 0; line-height: 10px; }
  .hash { text-align: center; color: #999; line-height: 10px; }

  .shelf { display: flex; align-items: center; height: 49px; flex: none; padding: 0 13px 0 4px; border-top: 1px solid #ccc; font-size: 16px; }
  .dl { display: flex; align-items: center; width: 227px; height: 36px; padding: 0 17px 0 16px; border-right: 1px solid #ccc; gap: 13px; }
  .dl span { flex: 1; white-space: nowrap; }
  .showall { margin: 0 13px 0 auto; height: 30px; width: 90px; padding: 0; border: 1px solid #8c8c8a; border-radius: 3px; background: #e2e0de; font-size: 14px; font-weight: 600; }
</style>
